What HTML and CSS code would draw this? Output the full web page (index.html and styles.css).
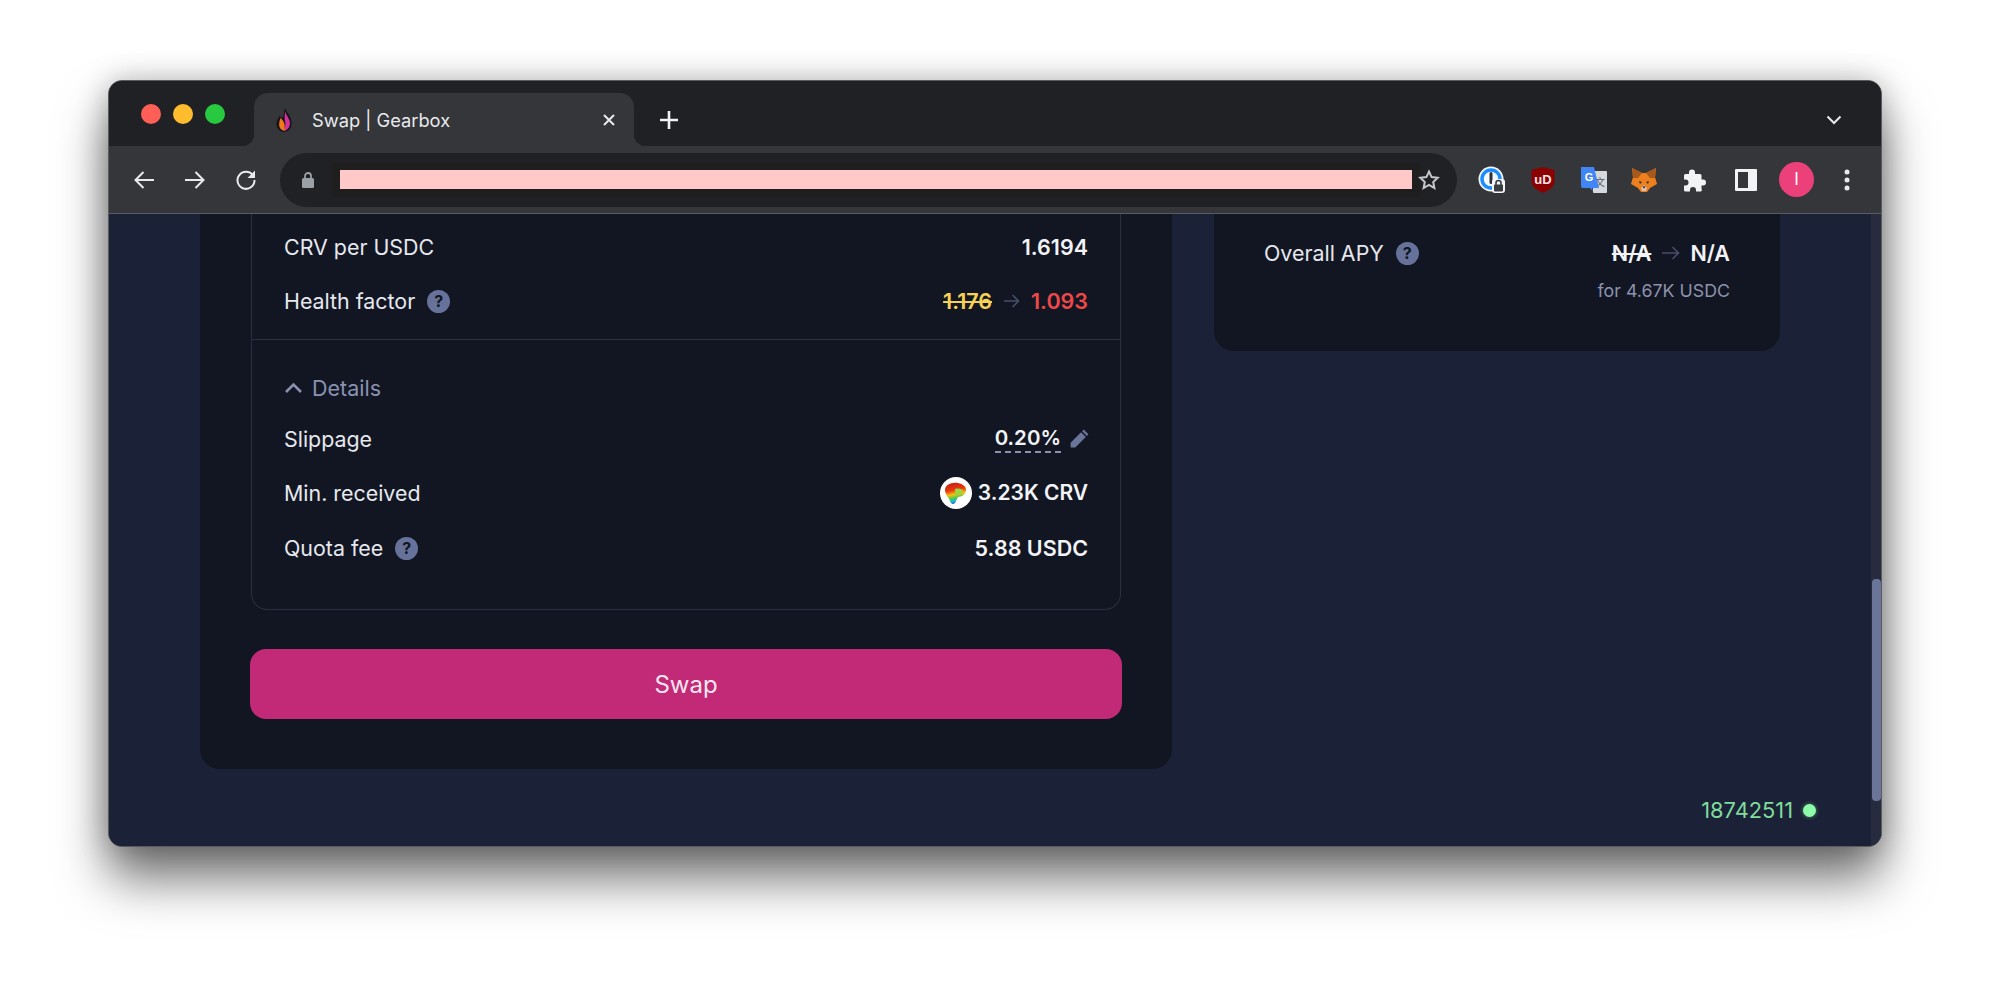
FILE: index.html
```html
<!DOCTYPE html>
<html lang="en">
<head>
  <meta charset="UTF-8" />
  <title>Swap | Gearbox</title>
  <link rel="stylesheet" href="styles.css">
</head>
<body>

  <div class="window">

    <div class="tabstrip">
      <div class="lights">
        <span class="light red"></span>
        <span class="light yellow"></span>
        <span class="light green"></span>
      </div>
      <div class="tab">
        <svg class="favicon" width="20" height="26" viewBox="0 0 18 24">
          <path d="M10 1c1 4 6 7 6 14 0 5-3 8-7 8s-7-3-7-8c0-3 2-5 3-7 1 2 2 2 3 2 1-3 1-6 2-9z" fill="#17131c"/>
          <path d="M10 4c1 4 4.500 7 4.500 11 0 4-2.500 6-4.500 7-1-2 1-5 0-9-1-3 0-6 0-9z" fill="#d6309a"/>
          <path d="M6 10c1 2 3 3 3.500 6 .2 2 0 4 .5 6-3 0-5.500-2-5.500-6 0-2 .5-4 1.500-6z" fill="#f07a16"/>
        </svg>
        <span class="tab-title">Swap | Gearbox</span>
        <svg class="tab-close" width="14" height="14" viewBox="0 0 14 14">
          <path d="M2 2l10 10M12 2L2 12" stroke="#e8eaed" stroke-width="2"/>
        </svg>
      </div>
      <svg class="new-tab" width="20" height="20" viewBox="0 0 20 20">
        <path d="M10 1v18M1 10h18" stroke="#f1f3f4" stroke-width="2.6"/>
      </svg>
      <svg class="tab-menu" width="16" height="10" viewBox="0 0 16 10">
        <path d="M1.500 1.500L8 8l6.500-6.500" fill="none" stroke="#e8eaed" stroke-width="2"/>
      </svg>
    </div>

    <div class="toolbar">
      <div class="tool">
        <svg width="22" height="20" viewBox="0 0 22 20"><path d="M21 10H2.500M10.500 2l-8 8 8 8" fill="none" stroke="#e8eaed" stroke-width="2"/></svg>
      </div>
      <div class="tool">
        <svg width="22" height="20" viewBox="0 0 22 20"><path d="M1 10h18.500M11.500 2l8 8-8 8" fill="none" stroke="#e8eaed" stroke-width="2"/></svg>
      </div>
      <div class="tool">
        <svg width="22" height="22" viewBox="0 0 22 22"><path d="M18 6.500A8.500 8.500 0 1 0 19.500 11" fill="none" stroke="#e8eaed" stroke-width="2"/><path d="M20 1.500v7.500h-7.500z" fill="#e8eaed"/></svg>
      </div>

      <div class="omnibox">
        <svg class="lock" width="14" height="18" viewBox="0 0 14 18">
          <path d="M4 8V5a3 3 0 0 1 6 0v3" fill="none" stroke="#9aa0a6" stroke-width="1.800"/>
          <rect x="1" y="7" width="12" height="10" rx="1.500" fill="#9aa0a6"/>
        </svg>
        <div class="url-mask"><div class="url-redacted"></div></div>
        <svg class="star" width="22" height="22" viewBox="0 0 22 22">
          <path d="M11 2.500l2.600 5.600 6.100.7-4.500 4.200 1.200 6-5.400-3-5.400 3 1.200-6-4.500-4.200 6.100-.7z" fill="none" stroke="#c4c7cc" stroke-width="2"/>
        </svg>
      </div>

      <div class="extensions">
        <div class="ext">
          <svg width="28" height="28" viewBox="0 0 28 28">
            <circle cx="13" cy="13" r="12.500" fill="#f4f7fb"/>
            <circle cx="13" cy="13" r="9" fill="none" stroke="#1a8cff" stroke-width="3.500"/>
            <rect x="11.500" y="6" width="3" height="12" rx="1.500" fill="#2c3138"/>
            <rect x="14" y="13" width="13" height="14" rx="3" fill="#f4f7fb"/>
            <path d="M18 19v-2a2.500 2.500 0 0 1 5 0v2" fill="none" stroke="#3a3d42" stroke-width="1.600"/>
            <rect x="16" y="18.500" width="9" height="7" rx="1" fill="#3a3d42"/>
          </svg>
        </div>
        <div class="ext">
          <svg width="24" height="26" viewBox="0 0 24 26">
            <path d="M12 0l11.500 3v11.500C23.500 20 17 23.500 12 26 7 23.500 .5 20 .5 14.500V3z" fill="#8b0000"/>
            <text class="ubo-text" x="12" y="17">uD</text>
          </svg>
        </div>
        <div class="ext">
          <svg width="28" height="28" viewBox="0 0 28 28">
            <rect x="13" y="5" width="14" height="22" rx="1" fill="#d5d8dc"/>
            <text class="translate-zh" x="20" y="20">文</text>
            <path d="M1 1h13l5 21H12l1 3-3-3H3a2 2 0 0 1-2-2z" fill="#4285f4"/>
            <text class="translate-g" x="9" y="15">G</text>
          </svg>
        </div>
        <div class="ext">
          <svg width="26" height="24" viewBox="0 0 26 24">
            <path d="M1 0l10 5h4l10-5-1 9 2 7-7 4-3 4h-6l-3-4-7-4 2-7z" fill="#ee7f1d"/>
            <path d="M1 0l10 5-4 5H2zM25 0L15 5l4 5h5z" fill="#a8581c"/>
            <path d="M8 13l3 1-2 2zM18 13l-3 1 2 2z" fill="#233447"/>
            <path d="M10 20l3-3 3 3-1 3h-4z" fill="#d7c1b3"/>
            <path d="M11.500 18.500h3l-1.500 2z" fill="#161616"/>
          </svg>
        </div>
        <div class="ext">
          <svg width="24" height="24" viewBox="0 0 24 24">
            <path d="M9 1.500a3 3 0 0 1 3 3V6h5a1.500 1.500 0 0 1 1.500 1.500v4H20a3 3 0 0 1 0 6h-1.500v3.500A1.500 1.500 0 0 1 17 23.500h-4v-1.500a3 3 0 0 0-6 0v1.500H2.500A1.500 1.500 0 0 1 1 22v-4.500h1.500a3 3 0 0 0 0-6H1v-4A1.500 1.500 0 0 1 2.500 6H6V4.500a3 3 0 0 1 3-3z" fill="#f1f3f4"/>
          </svg>
        </div>
        <div class="ext">
          <svg width="24" height="24" viewBox="0 0 24 24">
            <rect x="1" y="1" width="22" height="22" rx="1" fill="#f1f3f4"/>
            <rect x="4" y="4" width="10" height="16" fill="#35363a"/>
          </svg>
        </div>
        <div class="ext"><div class="avatar">I</div></div>
        <div class="ext">
          <svg width="6" height="22" viewBox="0 0 6 22">
            <circle cx="3" cy="3" r="2.500" fill="#e8eaed"/>
            <circle cx="3" cy="11" r="2.500" fill="#e8eaed"/>
            <circle cx="3" cy="19" r="2.500" fill="#e8eaed"/>
          </svg>
        </div>
      </div>
    </div>

    <div class="page">
      <div class="columns">

        <div class="card swap-card">
          <div class="summary">
            <div class="summary-top">
              <div class="row">
                <span class="label">CRV per USDC</span>
                <span class="value">1.6194</span>
              </div>
              <div class="row">
                <span class="label">Health factor <span class="help">?</span></span>
                <span class="value">
                  <s class="yellow-text">1.176</s>
                  <svg class="arrow" width="17" height="14" viewBox="0 0 17 14"><path d="M1 7h14.500M9.500 1l6 6-6 6" fill="none" stroke="#464e6b" stroke-width="1.600"/></svg>
                  <span class="red-text">1.093</span>
                </span>
              </div>
            </div>
            <div class="details">
              <div class="details-head">
                <svg width="19" height="12" viewBox="0 0 19 12"><path d="M2 10l7.500-7.500L17 10" fill="none" stroke="#8a92b2" stroke-width="2.600"/></svg>
                Details
              </div>
              <div class="detail-rows">
                <div class="row row-slippage">
                  <span class="label">Slippage</span>
                  <span class="value">
                    <span class="dashed">0.20%</span>
                    <svg class="pencil" width="21" height="21" viewBox="0 0 20 20"><path d="M14 1.500l4.500 4.500-1.500 1.500L12.500 3zM11.500 4l4.500 4.500L6 18.500H1.500V14z" fill="#6a7599"/></svg>
                  </span>
                </div>
                <div class="row row-received">
                  <span class="label">Min. received</span>
                  <span class="value value-received">
                    <svg class="crv" width="32" height="32" viewBox="0 0 32 32">
                      <defs>
                        <linearGradient id="crvFill" x1="0.3" y1="0" x2="0.5" y2="1">
                          <stop offset="0" stop-color="#c9200f"/>
                          <stop offset="0.35" stop-color="#ea3a10"/>
                          <stop offset="0.55" stop-color="#f5c211"/>
                          <stop offset="0.72" stop-color="#4fcb4a"/>
                          <stop offset="0.87" stop-color="#18b4e0"/>
                          <stop offset="1" stop-color="#2440d8"/>
                        </linearGradient>
                      </defs>
                      <circle cx="16" cy="16" r="16" fill="#fff"/>
                      <path d="M5 13c0-5 6-8 13-7 5 1 9 4 8 8-1 3-4 6-8 6l-3 6c-2 2-4 1-5-2-1-3-5-7-5-11z" fill="url(#crvFill)"/>
                      <path d="M15 12c4-1 8 0 8 2 0 2-4 4-8 4z" fill="#9ad63f"/>
                    </svg>
                    3.23K CRV
                  </span>
                </div>
                <div class="row row-quota">
                  <span class="label">Quota fee <span class="help">?</span></span>
                  <span class="value">5.88 USDC</span>
                </div>
              </div>
            </div>
          </div>
          <button class="swap-button">Swap</button>
        </div>

        <div class="card apy-card">
          <div class="row">
            <span class="label">Overall APY <span class="help">?</span></span>
            <span class="value value-apy">
              <s>N/A</s>
              <svg class="arrow" width="19" height="14" viewBox="0 0 19 14"><path d="M1 7h16.500M11.500 1l6 6-6 6" fill="none" stroke="#464e6b" stroke-width="1.600"/></svg>
              N/A
            </span>
          </div>
          <div class="apy-note">for 4.67K USDC</div>
        </div>

      </div>

      <div class="status">
        <span class="block-number">18742511</span>
        <span class="status-dot"></span>
      </div>

      <div class="scrollbar"><div class="scroll-thumb"></div></div>
    </div>

  </div>

</body>
</html>
```

FILE: styles.css
```css
body {
  margin: 0;
  padding: 80px 108px 0;
  height: 984px;
  box-sizing: border-box;
  background: #fff;
  font-family: Inter, "Noto Sans", sans-serif;
  overflow: hidden;
}

.window {
  width: 1774px;
  height: 767px;
  box-sizing: border-box;
  border: 1px solid #5a5b60;
  border-radius: 14px;
  overflow: hidden;
  display: flex;
  flex-direction: column;
  background: #202124;
  box-shadow: 0 32px 50px rgba(0, 0, 0, 0.55), 0 0 30px rgba(0, 0, 0, 0.25);
}

/* tab strip */
.tabstrip {
  height: 65px;
  flex: none;
  display: flex;
  align-items: flex-end;
  background: #202124;
}
.lights {
  display: flex;
  gap: 12px;
  padding: 0 0 22px 32px;
  width: 114px;
  flex: none;
}
.light {
  width: 20px;
  height: 20px;
  border-radius: 50%;
}
.light.red { background: #ff5f57; }
.light.yellow { background: #febc2e; }
.light.green { background: #28c840; }
.tab {
  width: 380px;
  height: 53px;
  margin-left: -1px;
  flex: none;
  display: flex;
  align-items: center;
  box-sizing: border-box;
  padding: 0 18px 0 20px;
  background: #35363a;
  border-radius: 14px 14px 0 0;
  position: relative;
}
.tab::before, .tab::after {
  content: "";
  position: absolute;
  bottom: 0;
  width: 12px;
  height: 12px;
}
.tab::before {
  left: -12px;
  background: radial-gradient(circle at 0 0, #202124 12px, #35363a 12.5px);
}
.tab::after {
  right: -12px;
  background: radial-gradient(circle at 100% 0, #202124 12px, #35363a 12.5px);
}
.tab-title {
  margin-left: 18px;
  flex: 1;
  font-size: 18.3px;
  color: #e8eaed;
  white-space: nowrap;
}
.new-tab {
  flex: none;
  margin: 0 0 16px 25px;
}
.tab-menu {
  flex: none;
  margin: 0 39px 21px auto;
}

/* toolbar */
.toolbar {
  height: 68px;
  flex: none;
  display: flex;
  align-items: center;
  box-sizing: border-box;
  padding-left: 9px;
  background: #35363a;
  border-bottom: 1px solid #5a5b60;
}
.tool {
  width: 51px;
  display: flex;
  justify-content: center;
}
.omnibox {
  width: 1177px;
  height: 54px;
  margin-left: 9px;
  flex: none;
  display: flex;
  align-items: center;
  box-sizing: border-box;
  padding-left: 21px;
  border-radius: 27px;
  background: #202124;
}
.lock { flex: none; }
.url-mask {
  width: 1088px;
  height: 34px;
  margin-left: 17px;
  flex: none;
  box-sizing: border-box;
  padding: 7px 8px 8px;
  background: #1e1e1e;
}
.url-redacted {
  height: 19px;
  background: #ffc9c9;
}
.star { margin-left: -2px; flex: none; }
.extensions {
  display: flex;
  margin-left: 10px;
}
.ext {
  width: 50.7px;
  height: 36px;
  display: flex;
  align-items: center;
  justify-content: center;
}
.avatar {
  width: 35px;
  height: 35px;
  border-radius: 50%;
  background: #ec407a;
  color: #fff;
  font-size: 17px;
  line-height: 35px;
  text-align: center;
}
.ubo-text {
  font: 700 13px "Liberation Sans", sans-serif;
  fill: #f4e3e3;
  text-anchor: middle;
}
.translate-g {
  font: 700 11px "Liberation Sans", sans-serif;
  fill: #fff;
  text-anchor: middle;
}
.translate-zh {
  font: 10px "Noto Sans CJK SC", sans-serif;
  fill: #55585e;
  text-anchor: middle;
}

/* page content */
.page {
  flex: 1;
  min-height: 0;
  display: flex;
  flex-direction: column;
  position: relative;
  background: #1b2136;
  color: #e6e8ee;
  overflow: hidden;
}
.columns {
  display: flex;
  align-items: flex-start;
  gap: 42px;
  padding-left: 91px;
}
.card {
  background: #121622;
  border-radius: 0 0 20px 20px;
  flex: none;
  box-sizing: border-box;
}
.swap-card {
  width: 972px;
  height: 555px;
  padding: 0 51px 0 51px;
}
.apy-card {
  width: 566px;
  height: 137px;
  padding: 12px 50px 0 50px;
}
.summary {
  border: 1px solid #2a2f42;
  border-top: none;
  border-radius: 0 0 16px 16px;
  margin-bottom: 39px;
}
.summary-top {
  padding: 6px 32px 11px 32px;
  border-bottom: 1px solid #2a2f42;
}
.row {
  display: flex;
  align-items: center;
  justify-content: space-between;
  height: 54px;
}
.label {
  font-size: 21.4px;
  display: flex;
  align-items: center;
  gap: 12px;
}
.value {
  font-size: 21.5px;
  font-weight: 600;
  display: flex;
  align-items: center;
  gap: 11px;
  color: #f2f3f7;
  white-space: nowrap;
}
.value-apy { gap: 10px; }
.value-received { font-size: 21px; }
.help {
  width: 23px;
  height: 23px;
  border-radius: 50%;
  background: #66729a;
  color: #121622;
  font-size: 16px;
  font-weight: 700;
  line-height: 23px;
  text-align: center;
}
.yellow-text { color: #f7d154; }
.red-text { color: #f04848; }
.arrow { flex: none; }

.details {
  padding: 33px 32px 43px 32px;
}
.details-head {
  display: flex;
  align-items: center;
  gap: 9px;
  height: 30px;
  font-size: 21.5px;
  color: #8a92b2;
}
.detail-rows {
  margin-top: 19px;
  display: flex;
  flex-direction: column;
  gap: 20px;
}
.row-slippage { height: 33px; }
.row-received { height: 35px; }
.row-quota { height: 36px; }
.dashed {
  border-bottom: 2px dashed #8a92b2;
  font-size: 20.5px;
  line-height: 26px;
}
.pencil { margin: 0 -2px 0 -3px; }
.crv { margin-right: -5px; }

.swap-button {
  display: block;
  width: 872px;
  height: 70px;
  margin-left: -1px;
  border: none;
  border-radius: 16px;
  background: #c22976;
  color: #f6e6ef;
  font: 400 24px Inter, sans-serif;
}

.apy-note {
  text-align: right;
  font-size: 17.8px;
  color: #8c92ad;
}

/* bottom status */
.status {
  margin-top: auto;
  height: 24px;
  padding: 0 65px 24px 0;
  display: flex;
  align-items: center;
  justify-content: flex-end;
  gap: 10px;
}
.block-number {
  font-size: 21.8px;
  color: #7fdc9c;
}
.status-dot {
  width: 13px;
  height: 13px;
  border-radius: 50%;
  background: #8dfdaa;
  box-shadow: 0 0 4px rgba(141, 253, 170, 0.5);
}

.scrollbar {
  position: absolute;
  top: 0;
  right: 0;
  bottom: 0;
  width: 10px;
  background: #262b3e;
}
.scroll-thumb {
  position: absolute;
  top: 365px;
  left: 1px;
  right: 0;
  height: 222px;
  border-radius: 4px;
  background: #6a7599;
}
```
